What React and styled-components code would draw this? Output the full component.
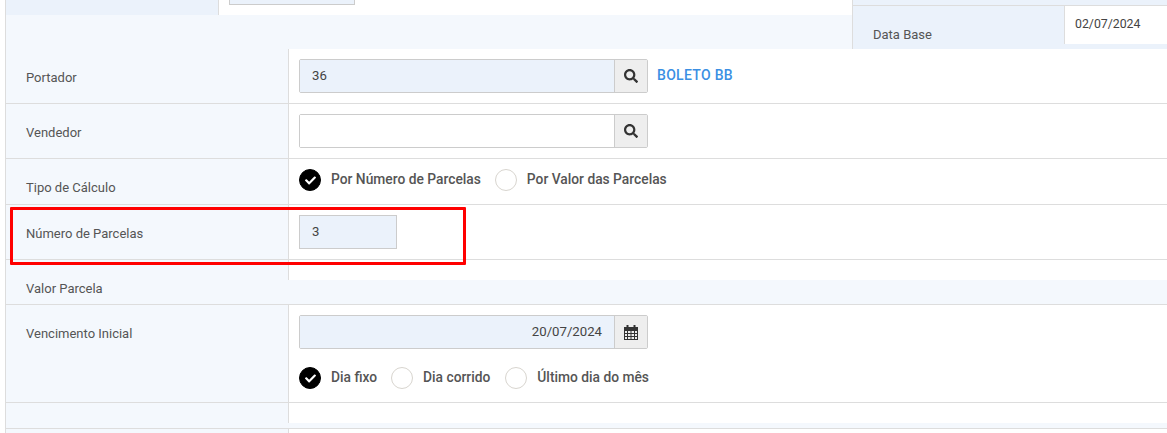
import React from "react";
import styled, { createGlobalStyle } from "styled-components";
import { FaSearch, FaCheck } from "react-icons/fa";

const Global = createGlobalStyle`
  html, body { margin: 0; padding: 0; background: #fff; }
  body { font-family: Roboto, "Liberation Sans", Arial, sans-serif; font-size: 13px; color: #555; }
`;

const Page = styled.div`
  position: relative;
  width: 1167px;
  height: 433px;
  overflow: hidden;
  box-sizing: border-box;
  padding-left: 5px;
`;
const Form = styled.div`
  border-left: 1px solid #ddd;
`;
const TopBand = styled.div`
  display: flex;
  height: 49px;
`;
const TopLeft = styled.div`
  width: 846px;
  display: flex;
  flex-direction: column;
  background: #f4f8fd;
`;
const TopCells = styled.div`
  display: flex;
  height: 15px;
  background: #fff;
`;
const TopLabel = styled.div`
  width: 212px;
  background: #ebf2fb;
  border-right: 1px solid #ddd;
`;
const TopValue = styled.div`
  padding-left: 10px;
`;
const TopInputStub = styled.div`
  box-sizing: border-box;
  width: 126px;
  height: 5px;
  background: #ebf2fb;
  border: 1px solid #ccc;
  border-top: 0;
`;
const TopRight = styled.div`
  flex: 1;
  border-left: 1px solid #ddd;
  background: #ebf2fb;
  display: flex;
  flex-direction: column;
`;
const TopRightHead = styled.div`
  height: 5px;
  border-bottom: 1px solid #ddd;
  flex: none;
`;
const TopRightBody = styled.div`
  display: flex;
  flex: 1;
`;
const DateLabel = styled.div`
  width: 211px;
  box-sizing: border-box;
  padding: 20px 0 0 20px;
  line-height: 18px;
  font-size: 13px;
  color: #555;
`;
const DateValue = styled.div`
  flex: 1;
  height: 38px;
  box-sizing: border-box;
  background: #fff;
  border-left: 1px solid #ddd;
  padding: 9px 0 0 10px;
  line-height: 18px;
  font-size: 12.3px;
  color: #444;
`;
const Row = styled.div`
  display: flex;
  box-sizing: border-box;
  height: ${(p) => p.$h}px;
  border-bottom: ${(p) => (p.$open ? "0" : "1px solid #ddd")};
`;
const Label = styled.div`
  width: 282px;
  flex: none;
  box-sizing: border-box;
  background: #f4f8fd;
  padding: 20px 0 0 20px;
  line-height: 18px;
  font-size: 13px;
  color: #555;
`;
const Value = styled.div`
  flex: 1;
  display: flex;
  flex-direction: column;
  min-width: 0;
`;
const Cell = styled.div`
  flex: 1;
  border-left: 1px solid #ddd;
  padding: 10px 0 0 10px;
`;
const Band = styled.div`
  height: ${(p) => p.$h}px;
  background: #f4f8fd;
  flex: none;
`;
const InputLine = styled.div`
  display: flex;
  align-items: center;
`;
const InputGroup = styled.div`
  display: flex;
  width: 349px;
  height: 34px;
  box-sizing: border-box;
  border: 1px solid #ccc;
  border-radius: 2px;
`;
const Field = styled.div`
  flex: 1;
  box-sizing: border-box;
  background: ${(p) => (p.$filled ? "#ebf2fb" : "#fff")};
  padding: 0 12px;
  line-height: 32px;
  font-size: 13.2px;
  color: #444;
  text-align: ${(p) => (p.$right ? "right" : "left")};
`;
const Addon = styled.div`
  width: 33px;
  flex: none;
  box-sizing: border-box;
  border-left: 1px solid #ccc;
  background: #eee;
  color: #333;
  display: flex;
  align-items: center;
  justify-content: center;
  font-size: 14px;
`;
const LinkText = styled.span`
  margin: -2px 0 0 9px;
  font-size: 14px;
  font-weight: 500;
  letter-spacing: 0.3px;
  color: #3b8fe3;
`;
const ShortInput = styled.div`
  width: 98px;
  height: 34px;
  box-sizing: border-box;
  border: 1px solid #ccc;
  background: #ebf2fb;
  padding: 0 12px;
  line-height: 32px;
  font-size: 13.2px;
  color: #444;
`;
const RadioGroup = styled.div`
  display: flex;
  align-items: center;
  height: 22px;
  margin-top: ${(p) => p.$mt ?? 0}px;
`;
const Circle = styled.span`
  width: 22px;
  height: 22px;
  box-sizing: border-box;
  border-radius: 50%;
  flex: none;
  display: flex;
  align-items: center;
  justify-content: center;
  color: #fff;
  font-size: 11px;
  background: ${(p) => (p.$on ? "#000" : "#fff")};
  border: 1px solid ${(p) => (p.$on ? "#000" : "#d8d5cf")};
`;
const RadioText = styled.span`
  margin: -2px ${(p) => p.$gap ?? 14}px 0 10px;
  font-size: 13.8px;
  font-weight: 500;
  color: #555;
`;
const Highlight = styled.div`
  position: absolute;
  left: 10px;
  top: 207px;
  width: 456px;
  height: 58px;
  box-sizing: border-box;
  border: 3px solid #f00;
  border-radius: 1px;
  pointer-events: none;
`;

const CalendarIcon = () => (
  <svg width="14" height="15" viewBox="0 0 14 15" fill="none" aria-hidden="true">
    <rect x="2.5" y="0" width="2" height="3" fill="#333" />
    <rect x="9.5" y="0" width="2" height="3" fill="#333" />
    <rect x="0" y="2" width="14" height="4" fill="#333" />
    <rect x="0.5" y="5.5" width="13" height="9" stroke="#333" fill="#eee" />
    <path d="M0 8.5h14M0 11.5h14M3.5 6v8M7 6v8M10.5 6v8" stroke="#333" strokeWidth="1" />
  </svg>
);

const Radio = ({ on, gap, children }) => (
  <>
    <Circle $on={on}>{on && <FaCheck />}</Circle>
    <RadioText $gap={gap}>{children}</RadioText>
  </>
);

export default function App() {
  return (
    <>
      <Global />
      <Page>
        <Form>
          <TopBand>
            <TopLeft>
              <TopCells>
                <TopLabel />
                <TopValue>
                  <TopInputStub />
                </TopValue>
              </TopCells>
            </TopLeft>
            <TopRight>
              <TopRightHead />
              <TopRightBody>
                <DateLabel>Data Base</DateLabel>
                <DateValue>02/07/2024</DateValue>
              </TopRightBody>
            </TopRight>
          </TopBand>

          <Row $h={55}>
            <Label>Portador</Label>
            <Value>
              <Cell>
                <InputLine>
                  <InputGroup>
                    <Field $filled>36</Field>
                    <Addon><FaSearch /></Addon>
                  </InputGroup>
                  <LinkText>BOLETO BB</LinkText>
                </InputLine>
              </Cell>
            </Value>
          </Row>
          <Row $h={55}>
            <Label>Vendedor</Label>
            <Value>
              <Cell>
                <InputGroup>
                  <Field />
                  <Addon><FaSearch /></Addon>
                </InputGroup>
              </Cell>
            </Value>
          </Row>
          <Row $h={46}>
            <Label>Tipo de Cálculo</Label>
            <Value>
              <Cell>
                <RadioGroup>
                  <Radio on>Por Número de Parcelas</Radio>
                  <Radio>Por Valor das Parcelas</Radio>
                </RadioGroup>
              </Cell>
            </Value>
          </Row>
          <Row $h={55}>
            <Label>Número de Parcelas</Label>
            <Value>
              <Cell>
                <ShortInput>3</ShortInput>
              </Cell>
            </Value>
          </Row>
          <Row $h={45}>
            <Label>Valor Parcela</Label>
            <Value>
              <Cell />
              <Band $h={24} />
            </Value>
          </Row>
          <Row $h={98}>
            <Label>Vencimento Inicial</Label>
            <Value>
              <Cell>
                <InputGroup>
                  <Field $filled $right>20/07/2024</Field>
                  <Addon><CalendarIcon /></Addon>
                </InputGroup>
                <RadioGroup $mt={18}>
                  <Radio on gap={14}>Dia fixo</Radio>
                  <Radio gap={15}>Dia corrido</Radio>
                  <Radio>Último dia do mês</Radio>
                </RadioGroup>
              </Cell>
            </Value>
          </Row>
          <Row $h={26}>
            <Label />
            <Value>
              <Cell />
              <Band $h={5} />
            </Value>
          </Row>
          <Row $h={10} $open>
            <Label />
            <Value>
              <Cell />
            </Value>
          </Row>
        </Form>
        <Highlight />
      </Page>
    </>
  );
}
